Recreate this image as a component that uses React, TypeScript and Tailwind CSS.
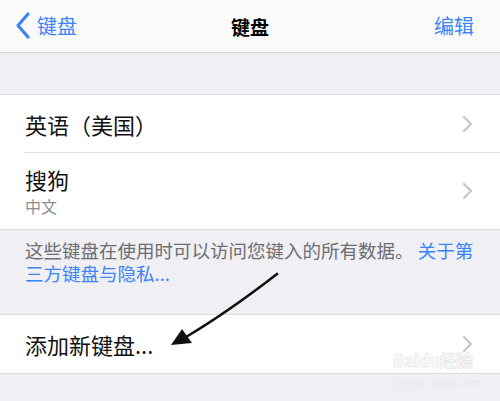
export default function App() {
  return (
    <div
      className="relative h-[401px] w-[500px] overflow-hidden bg-[#efeff4]"
      style={{ fontFamily: '"Noto Sans CJK SC", "Noto Sans", sans-serif' }}
    >
      {/* nav bar */}
      <div className="relative flex h-[53px] items-center border-b border-[#d6d6da] bg-[#fafafa]">
        <div className="flex items-center pl-[14px] text-[20px] leading-none text-[#3a84f7]">
          <svg width="18" height="28" viewBox="0 0 18 28" className="mr-[5px]">
            <path d="M14 2 L4 13.5 L14 25" fill="none" stroke="#3a84f7" strokeWidth="3.2" strokeLinecap="round" strokeLinejoin="round" />
          </svg>
          <span>键盘</span>
        </div>
        <div className="absolute left-1/2 -translate-x-1/2 text-[19px] font-bold leading-none text-black">键盘</div>
        <div className="ml-auto pr-[26px] text-[20px] leading-none text-[#3a84f7]">编辑</div>
      </div>

      <div className="h-[41px]" />

      {/* keyboards group */}
      <div className="border-y border-[#dcdce0] bg-white">
        <div className="flex h-[57px] items-center pl-[25px] pr-[27px]">
          <span className="text-[22px] leading-none text-[#111]">英语（美国）</span>
          <Chevron />
        </div>
        <div className="ml-[24px] h-px bg-[#dcdce0]" />
        <div className="flex h-[76px] items-center pl-[25px] pr-[27px]">
          <div className="flex flex-col">
            <span className="text-[22px] leading-[24px] text-[#111]">搜狗</span>
            <span className="mt-[5px] text-[16px] leading-[20px] text-[#8e8e93]">中文</span>
          </div>
          <Chevron />
        </div>
      </div>

      {/* footer */}
      <p className="h-[84px] px-[25px] pt-[9px] text-[18.5px] leading-[23px] text-[#6d6d72]">
        这些键盘在使用时可以访问您键入的所有数据。 <span className="text-[#3a84f7]">关于第三方键盘与隐私...</span>
      </p>

      {/* add keyboard */}
      <div className="flex h-[60px] items-center border-y border-[#dcdce0] bg-white pl-[25px] pr-[27px]">
        <span className="text-[22px] leading-none text-[#111]">添加新键盘...</span>
        <Chevron />
      </div>

      {/* annotation arrow */}
      <svg className="pointer-events-none absolute left-0 top-0" width="500" height="401" viewBox="0 0 500 401">
        <path d="M277 274 Q228 312 186 337" fill="none" stroke="#111" strokeWidth="2.6" strokeLinecap="round" />
        <path d="M171 345 L182 329 L192 343 Z" fill="#111" />
      </svg>

      {/* watermark */}
      <div className="pointer-events-none absolute left-[393px] top-[350px] flex w-[80px] flex-col items-start text-white/80">
        <span className="text-[17px] font-bold leading-[20px] tracking-tight" style={{ WebkitTextStroke: '0.5px #d8d8dc' }}>Baidu经验</span>
        <span className="mt-[6px] text-[10.5px] leading-[14px]" style={{ WebkitTextStroke: '0.3px #e0e0e4' }}>jingyan.baidu.com</span>
      </div>
    </div>
  );
}

function Chevron() {
  return (
    <svg width="11" height="18" viewBox="0 0 11 18" className="ml-auto">
      <path d="M2 2 L9 9 L2 16" fill="none" stroke="#c7c7cc" strokeWidth="2.4" strokeLinecap="round" strokeLinejoin="round" />
    </svg>
  );
}
